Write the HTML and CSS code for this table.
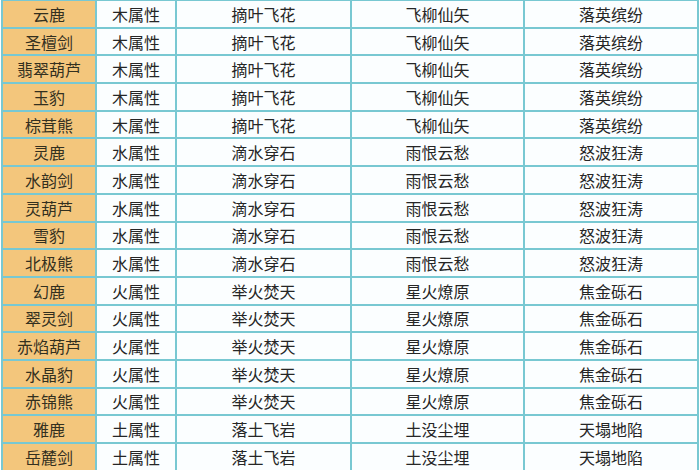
FILE: index.html
```html
<!DOCTYPE html>
<html lang="zh">
<head>
<meta charset="utf-8">
<link rel="stylesheet" href="styles.css">
</head>
<body>
<table class="skills">
<colgroup><col class="c1"><col class="c2"><col class="c3"><col class="c4"><col class="c5"></colgroup>
<tbody>
<tr><th>云鹿</th><td>木属性</td><td>摘叶飞花</td><td>飞柳仙矢</td><td>落英缤纷</td></tr>
<tr><th>圣檀剑</th><td>木属性</td><td>摘叶飞花</td><td>飞柳仙矢</td><td>落英缤纷</td></tr>
<tr><th>翡翠葫芦</th><td>木属性</td><td>摘叶飞花</td><td>飞柳仙矢</td><td>落英缤纷</td></tr>
<tr><th>玉豹</th><td>木属性</td><td>摘叶飞花</td><td>飞柳仙矢</td><td>落英缤纷</td></tr>
<tr><th>棕茸熊</th><td>木属性</td><td>摘叶飞花</td><td>飞柳仙矢</td><td>落英缤纷</td></tr>
<tr><th>灵鹿</th><td>水属性</td><td>滴水穿石</td><td>雨恨云愁</td><td>怒波狂涛</td></tr>
<tr><th>水韵剑</th><td>水属性</td><td>滴水穿石</td><td>雨恨云愁</td><td>怒波狂涛</td></tr>
<tr><th>灵葫芦</th><td>水属性</td><td>滴水穿石</td><td>雨恨云愁</td><td>怒波狂涛</td></tr>
<tr><th>雪豹</th><td>水属性</td><td>滴水穿石</td><td>雨恨云愁</td><td>怒波狂涛</td></tr>
<tr><th>北极熊</th><td>水属性</td><td>滴水穿石</td><td>雨恨云愁</td><td>怒波狂涛</td></tr>
<tr><th>幻鹿</th><td>火属性</td><td>举火焚天</td><td>星火燎原</td><td>焦金砾石</td></tr>
<tr><th>翠灵剑</th><td>火属性</td><td>举火焚天</td><td>星火燎原</td><td>焦金砾石</td></tr>
<tr><th>赤焰葫芦</th><td>火属性</td><td>举火焚天</td><td>星火燎原</td><td>焦金砾石</td></tr>
<tr><th>水晶豹</th><td>火属性</td><td>举火焚天</td><td>星火燎原</td><td>焦金砾石</td></tr>
<tr><th>赤锦熊</th><td>火属性</td><td>举火焚天</td><td>星火燎原</td><td>焦金砾石</td></tr>
<tr><th>雅鹿</th><td>土属性</td><td>落土飞岩</td><td>土没尘埋</td><td>天塌地陷</td></tr>
<tr><th>岳麓剑</th><td>土属性</td><td>落土飞岩</td><td>土没尘埋</td><td>天塌地陷</td></tr>
</tbody>
</table>
</body>
</html>
```
FILE: styles.css
```css
html, body {
  margin: 0;
  padding: 0;
  background: #ffffff;
  overflow: hidden;
}
body {
  padding-left: 1px;
  font-family: "Noto Sans CJK SC", "Noto Sans", sans-serif;
}
.skills {
  border-collapse: collapse;
  table-layout: fixed;
  width: 696px;
  margin-top: -1px;
}
.c1 { width: 94px; }
.c2 { width: 80px; }
.c3 { width: 175px; }
.c4 { width: 173px; }
.c5 { width: 174px; }
.skills tr {
  height: 27.7px;
}
.skills th,
.skills td {
  border: 2px solid #78c8d2;
  padding: 0;
  text-align: center;
  vertical-align: middle;
  font-size: 16px;
  font-weight: normal;
  line-height: 18px;
  color: #262626;
  background: #fbfeff;
  white-space: nowrap;
}
.skills th {
  background: #f3c67c;
  color: #33301f;
}
```
